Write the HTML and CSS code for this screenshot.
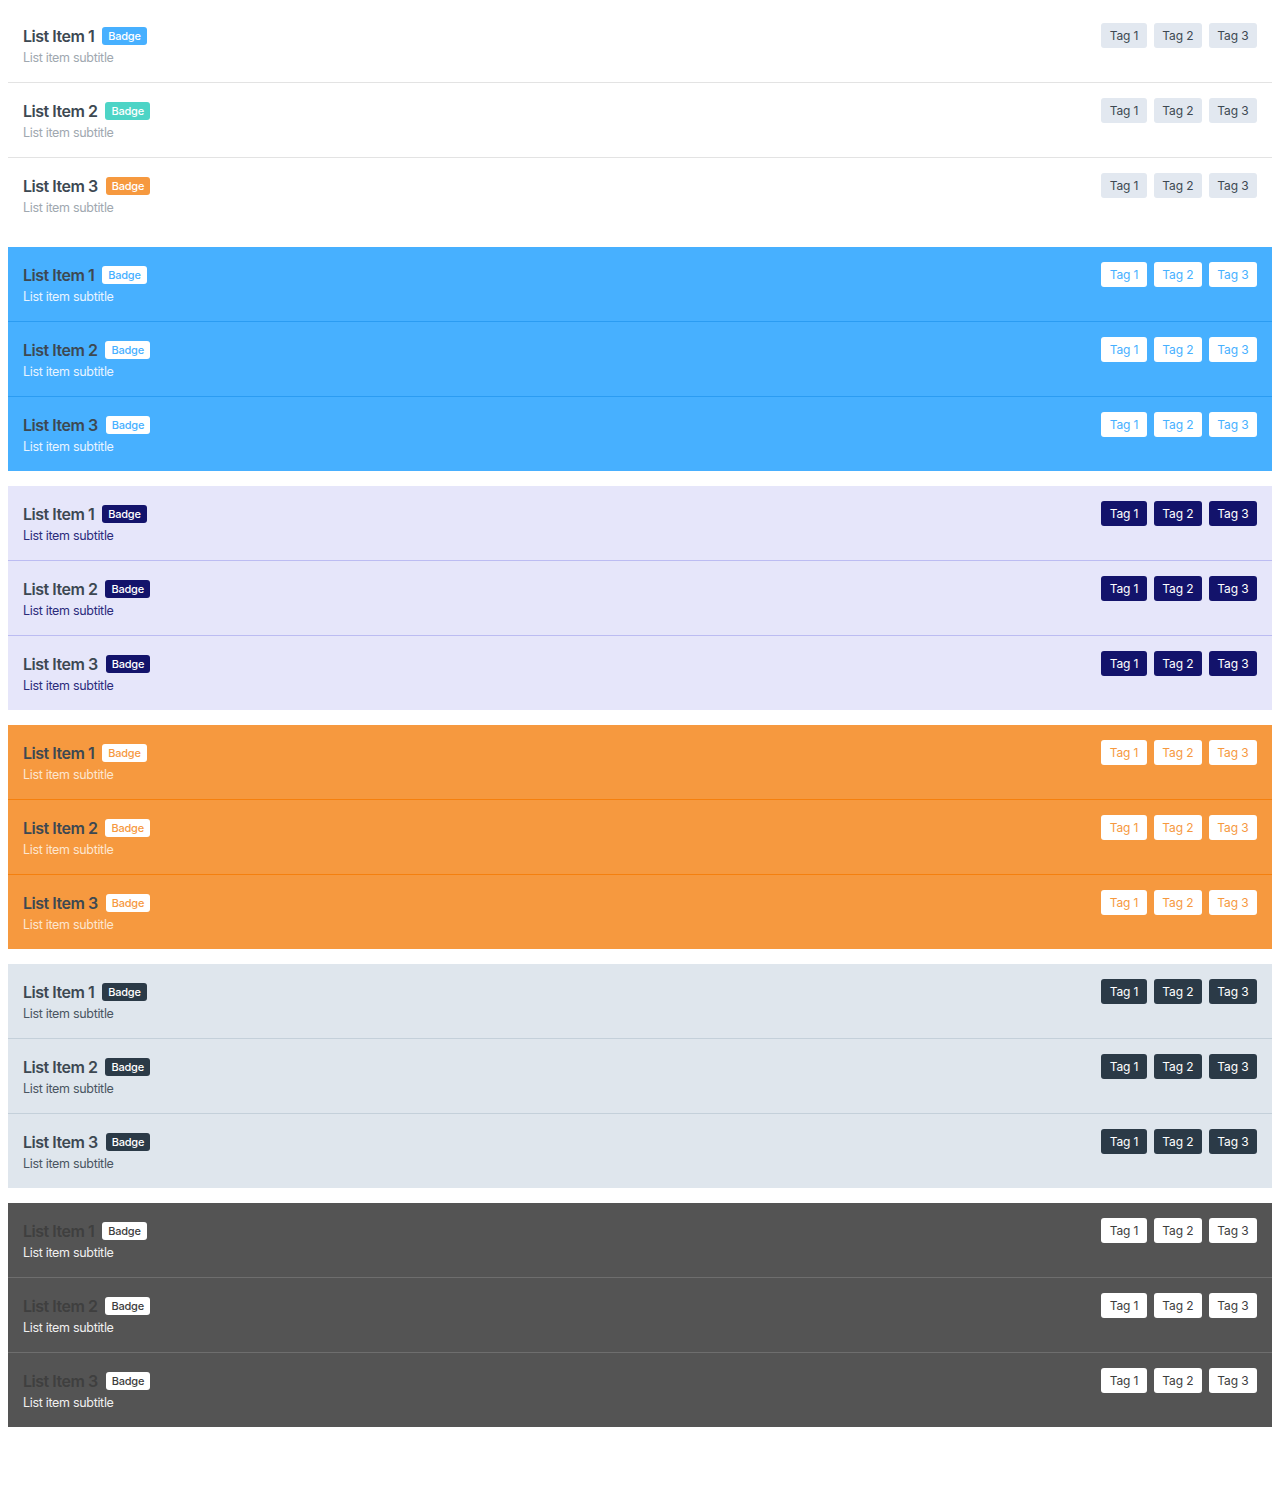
FILE: index.html
```html
<!DOCTYPE html>
<html>
<head>
<meta charset="utf-8">
<link rel="stylesheet" href="styles.css">
</head>
<body>
<div class="lists">
  <ul class="list list-default">
    <li class="item"><div class="main"><div class="title-row"><span class="title">List Item 1</span><span class="badge badge-blue">Badge</span></div><div class="subtitle">List item subtitle</div></div><div class="tags"><span class="tag">Tag 1</span><span class="tag">Tag 2</span><span class="tag">Tag 3</span></div></li>
    <li class="item"><div class="main"><div class="title-row"><span class="title">List Item 2</span><span class="badge badge-teal">Badge</span></div><div class="subtitle">List item subtitle</div></div><div class="tags"><span class="tag">Tag 1</span><span class="tag">Tag 2</span><span class="tag">Tag 3</span></div></li>
    <li class="item"><div class="main"><div class="title-row"><span class="title">List Item 3</span><span class="badge badge-orange">Badge</span></div><div class="subtitle">List item subtitle</div></div><div class="tags"><span class="tag">Tag 1</span><span class="tag">Tag 2</span><span class="tag">Tag 3</span></div></li>
  </ul>
  <ul class="list list-blue">
    <li class="item"><div class="main"><div class="title-row"><span class="title">List Item 1</span><span class="badge">Badge</span></div><div class="subtitle">List item subtitle</div></div><div class="tags"><span class="tag">Tag 1</span><span class="tag">Tag 2</span><span class="tag">Tag 3</span></div></li>
    <li class="item"><div class="main"><div class="title-row"><span class="title">List Item 2</span><span class="badge">Badge</span></div><div class="subtitle">List item subtitle</div></div><div class="tags"><span class="tag">Tag 1</span><span class="tag">Tag 2</span><span class="tag">Tag 3</span></div></li>
    <li class="item"><div class="main"><div class="title-row"><span class="title">List Item 3</span><span class="badge">Badge</span></div><div class="subtitle">List item subtitle</div></div><div class="tags"><span class="tag">Tag 1</span><span class="tag">Tag 2</span><span class="tag">Tag 3</span></div></li>
  </ul>
  <ul class="list list-lavender">
    <li class="item"><div class="main"><div class="title-row"><span class="title">List Item 1</span><span class="badge">Badge</span></div><div class="subtitle">List item subtitle</div></div><div class="tags"><span class="tag">Tag 1</span><span class="tag">Tag 2</span><span class="tag">Tag 3</span></div></li>
    <li class="item"><div class="main"><div class="title-row"><span class="title">List Item 2</span><span class="badge">Badge</span></div><div class="subtitle">List item subtitle</div></div><div class="tags"><span class="tag">Tag 1</span><span class="tag">Tag 2</span><span class="tag">Tag 3</span></div></li>
    <li class="item"><div class="main"><div class="title-row"><span class="title">List Item 3</span><span class="badge">Badge</span></div><div class="subtitle">List item subtitle</div></div><div class="tags"><span class="tag">Tag 1</span><span class="tag">Tag 2</span><span class="tag">Tag 3</span></div></li>
  </ul>
  <ul class="list list-orange">
    <li class="item"><div class="main"><div class="title-row"><span class="title">List Item 1</span><span class="badge">Badge</span></div><div class="subtitle">List item subtitle</div></div><div class="tags"><span class="tag">Tag 1</span><span class="tag">Tag 2</span><span class="tag">Tag 3</span></div></li>
    <li class="item"><div class="main"><div class="title-row"><span class="title">List Item 2</span><span class="badge">Badge</span></div><div class="subtitle">List item subtitle</div></div><div class="tags"><span class="tag">Tag 1</span><span class="tag">Tag 2</span><span class="tag">Tag 3</span></div></li>
    <li class="item"><div class="main"><div class="title-row"><span class="title">List Item 3</span><span class="badge">Badge</span></div><div class="subtitle">List item subtitle</div></div><div class="tags"><span class="tag">Tag 1</span><span class="tag">Tag 2</span><span class="tag">Tag 3</span></div></li>
  </ul>
  <ul class="list list-grey">
    <li class="item"><div class="main"><div class="title-row"><span class="title">List Item 1</span><span class="badge">Badge</span></div><div class="subtitle">List item subtitle</div></div><div class="tags"><span class="tag">Tag 1</span><span class="tag">Tag 2</span><span class="tag">Tag 3</span></div></li>
    <li class="item"><div class="main"><div class="title-row"><span class="title">List Item 2</span><span class="badge">Badge</span></div><div class="subtitle">List item subtitle</div></div><div class="tags"><span class="tag">Tag 1</span><span class="tag">Tag 2</span><span class="tag">Tag 3</span></div></li>
    <li class="item"><div class="main"><div class="title-row"><span class="title">List Item 3</span><span class="badge">Badge</span></div><div class="subtitle">List item subtitle</div></div><div class="tags"><span class="tag">Tag 1</span><span class="tag">Tag 2</span><span class="tag">Tag 3</span></div></li>
  </ul>
  <ul class="list list-dark">
    <li class="item"><div class="main"><div class="title-row"><span class="title">List Item 1</span><span class="badge">Badge</span></div><div class="subtitle">List item subtitle</div></div><div class="tags"><span class="tag">Tag 1</span><span class="tag">Tag 2</span><span class="tag">Tag 3</span></div></li>
    <li class="item"><div class="main"><div class="title-row"><span class="title">List Item 2</span><span class="badge">Badge</span></div><div class="subtitle">List item subtitle</div></div><div class="tags"><span class="tag">Tag 1</span><span class="tag">Tag 2</span><span class="tag">Tag 3</span></div></li>
    <li class="item"><div class="main"><div class="title-row"><span class="title">List Item 3</span><span class="badge">Badge</span></div><div class="subtitle">List item subtitle</div></div><div class="tags"><span class="tag">Tag 1</span><span class="tag">Tag 2</span><span class="tag">Tag 3</span></div></li>
  </ul>
</div>
</body>
</html>
```
FILE: styles.css
```css
* { box-sizing: border-box; }
body {
  margin: 8px;
  font-family: Inter, "Noto Sans", sans-serif;
  background: #fff;
}
.lists {
  display: flex;
  flex-direction: column;
  gap: 15px;
}
.list {
  list-style: none;
  margin: 0;
  padding: 0;
}
.item {
  display: flex;
  align-items: flex-start;
  justify-content: space-between;
  padding: 15px 15px;
  border-bottom: 1px solid #e3e3e3;
}
.item:last-child { border-bottom: none; }
.main {
  padding-top: 1px;
  margin-bottom: -1px;
}
.title-row {
  display: flex;
  align-items: center;
  gap: 8px;
  height: 24px;
}
.title {
  font-size: 16px;
  font-weight: 600;
  letter-spacing: -0.03em;
  color: #3d4852;
  line-height: 24px;
}
.badge {
  font-size: 11px;
  font-weight: 500;
  letter-spacing: -0.02em;
  line-height: 18px;
  height: 18px;
  padding: 0 6px;
  border-radius: 3px;
  color: #fff;
}
.badge-blue { background: #47b0ff; }
.badge-teal { background: #4dd4c6; }
.badge-orange { background: #f6993f; }
.subtitle {
  font-size: 12.5px;
  line-height: 20px;
  color: #a0a8b0;
  letter-spacing: -0.025em;
}
.tags {
  display: flex;
  gap: 7px;
}
.tag {
  font-size: 12px;
  line-height: 25px;
  height: 25px;
  padding: 0 8.5px;
  border-radius: 3px;
  background: #e2e8f0;
  color: #3d4852;
  letter-spacing: -0.01em;
}

/* blue */
.list-blue { background: #47b0ff; }
.list-blue .item { border-bottom-color: #2b9cf2; }
.list-blue .subtitle { color: #e8f4ff; }
.list-blue .badge, .list-blue .tag { background: #fff; color: #47b0ff; }

/* lavender */
.list-lavender { background: #e6e6fa; }
.list-lavender .item { border-bottom-color: #bcbcf2; }
.list-lavender .subtitle { color: #2b2b7a; }
.list-lavender .badge, .list-lavender .tag { background: #13136b; color: #fff; }

/* orange */
.list-orange { background: #f6993f; }
.list-orange .item { border-bottom-color: #f5800e; }
.list-orange .subtitle { color: #fde6cf; }
.list-orange .badge, .list-orange .tag { background: #fff; color: #f6993f; }

/* grey */
.list-grey { background: #dfe6ed; }
.list-grey .item { border-bottom-color: #c4d0da; }
.list-grey .subtitle { color: #4a5561; }
.list-grey .badge, .list-grey .tag { background: #2b3a47; color: #fff; }

/* dark */
.list-dark { background: #545454; }
.list-dark .item { border-bottom-color: #6e6e6e; }
.list-dark .title { color: #3f3f3f; }
.list-dark .subtitle { color: #f0f0f0; }
.list-dark .badge, .list-dark .tag { background: #fff; color: #3d3d3d; }
```
